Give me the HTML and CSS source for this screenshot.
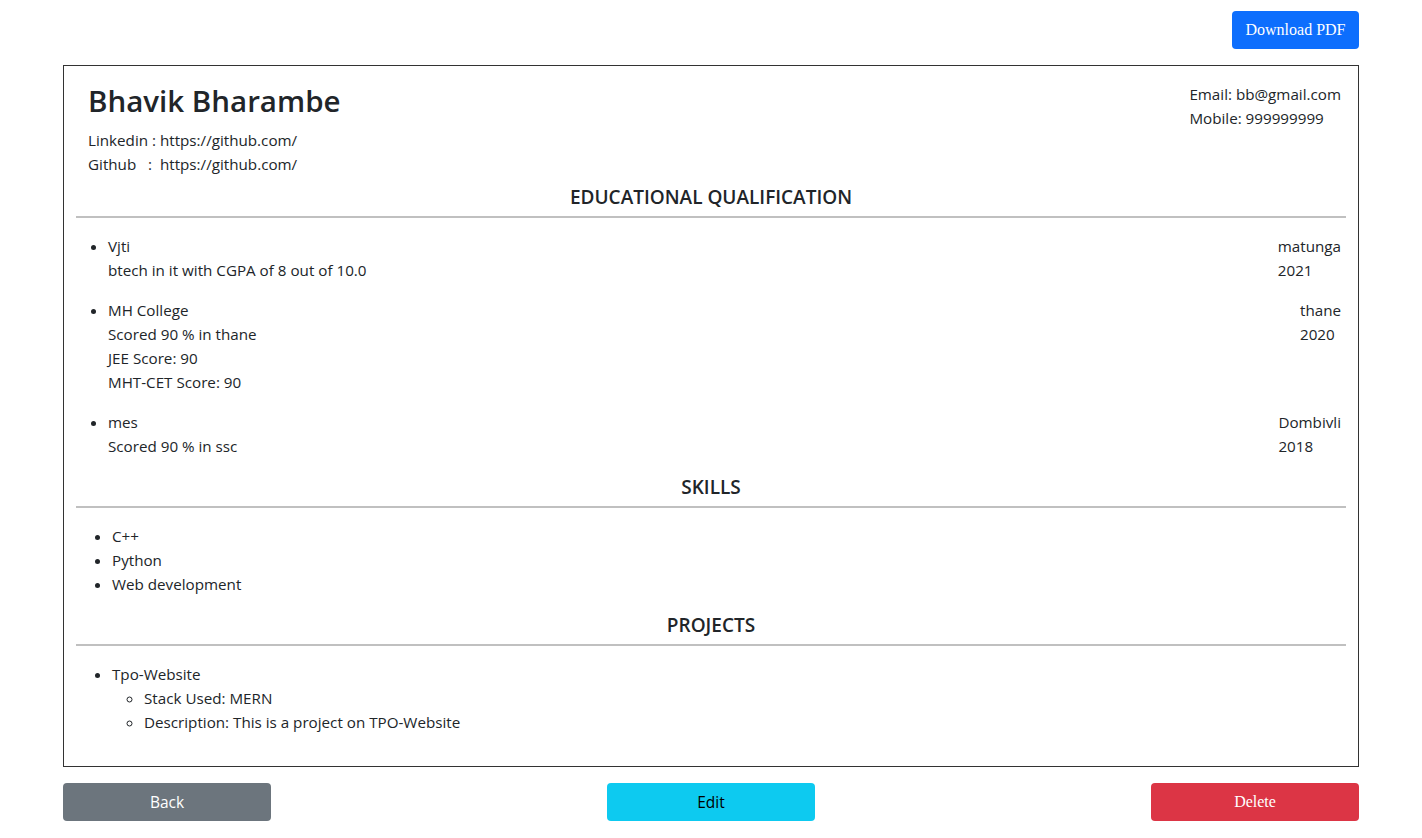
FILE: index.html
```html
<!DOCTYPE html>
<html lang="en">
<head>
<meta charset="utf-8">
<title>Resume</title>
<link rel="stylesheet" href="styles.css">
</head>
<body>
<div class="container">
  <div class="top-bar">
    <button class="btn btn-primary serif">Download PDF</button>
  </div>

  <div class="resume">
    <div class="header">
      <div class="header-left">
        <h1 class="name">Bhavik Bharambe</h1>
        <div class="line">Linkedin : https://github.com/</div>
        <div class="line">Github &nbsp;&nbsp;: &nbsp;https://github.com/</div>
      </div>
      <div class="header-right">
        <div class="line">Email: bb@gmail.com</div>
        <div class="line">Mobile: 999999999</div>
      </div>
    </div>

    <h2 class="section-title first">EDUCATIONAL QUALIFICATION</h2>
    <hr class="rule">
    <ul class="edu-list">
      <li class="edu-item">
        <div class="edu-left">
          <div>Vjti</div>
          <div>btech in it with CGPA of 8 out of 10.0</div>
        </div>
        <div class="edu-right">
          <div>matunga</div>
          <div>2021</div>
        </div>
      </li>
      <li class="edu-item">
        <div class="edu-left">
          <div>MH College</div>
          <div>Scored 90 % in thane</div>
          <div>JEE Score: 90</div>
          <div>MHT-CET Score: 90</div>
        </div>
        <div class="edu-right">
          <div>thane</div>
          <div>2020</div>
        </div>
      </li>
      <li class="edu-item">
        <div class="edu-left">
          <div>mes</div>
          <div>Scored 90 % in ssc</div>
        </div>
        <div class="edu-right">
          <div>Dombivli</div>
          <div>2018</div>
        </div>
      </li>
    </ul>

    <h2 class="section-title">SKILLS</h2>
    <hr class="rule">
    <ul class="plain-list">
      <li>C++</li>
      <li>Python</li>
      <li>Web development</li>
    </ul>

    <h2 class="section-title">PROJECTS</h2>
    <hr class="rule">
    <ul class="plain-list">
      <li>Tpo-Website
        <ul class="sub-list">
          <li>Stack Used: MERN</li>
          <li>Description: This is a project on TPO-Website</li>
        </ul>
      </li>
    </ul>
  </div>

  <div class="actions">
    <button class="btn btn-secondary">Back</button>
    <button class="btn btn-info">Edit</button>
    <button class="btn btn-danger serif">Delete</button>
  </div>
</div>
</body>
</html>
```

FILE: styles.css
```css
* { box-sizing: border-box; }

body {
  margin: 0;
  font-family: "Open Sans", "Noto Sans", sans-serif;
  font-size: 15.2px;
  line-height: 24px;
  color: #212529;
  background: #fff;
}

.container {
  width: 1296px;
  margin: 0 auto;
}

.top-bar {
  display: flex;
  justify-content: flex-end;
  padding-top: 11px;
  margin-bottom: 16px;
}

.btn {
  border: 1px solid transparent;
  border-radius: 4px;
  height: 38px;
  padding: 0 12px;
  font-family: "Open Sans", "Noto Sans", sans-serif;
  font-size: 15.5px;
  line-height: 24px;
  cursor: pointer;
}

.serif { font-family: "Liberation Serif", "Times New Roman", serif; font-size: 16px; }

.btn-primary { background: #0d6efd; color: #fff; width: 127px; }
.btn-secondary { background: #6c757d; color: #fff; width: 208px; }
.btn-info { background: #0dcaf0; color: #000; width: 208px; }
.btn-danger { background: #dc3545; color: #fff; width: 208px; }

.resume {
  border: 1px solid #333;
  padding: 16px 12px 16px;
}

.header {
  display: flex;
  justify-content: space-between;
  padding: 0 5px 0 12px;
}

.name {
  margin: 0 0 8px;
  font-size: 29.5px;
  line-height: 38px;
  font-weight: 600;
}

.line { white-space: pre-wrap; }

.section-title {
  margin: 0;
  padding-top: 1px;
  text-align: center;
  font-size: 19px;
  line-height: 24px;
  font-weight: 600;
}

.section-title.first { margin-top: 9px; padding-top: 0; }

.rule {
  border: 0;
  border-top: 2px solid #c0c0c0;
  margin: 7px 0 16px;
  height: 0;
}

.edu-list {
  margin: 0;
  padding: 0 5px 0 32px;
}

.edu-item {
  margin-bottom: 16px;
}

.edu-item > .edu-left { display: inline-block; vertical-align: top; }

.edu-item .edu-right {
  float: right;
}

.edu-item::after {
  content: "";
  display: block;
  clear: both;
}

.plain-list {
  margin: 0 0 16px;
  padding-left: 36px;
}

.sub-list {
  margin: 0;
  padding-left: 32px;
  list-style-type: circle;
}

.actions {
  display: flex;
  justify-content: space-between;
  margin-top: 16px;
}
```
